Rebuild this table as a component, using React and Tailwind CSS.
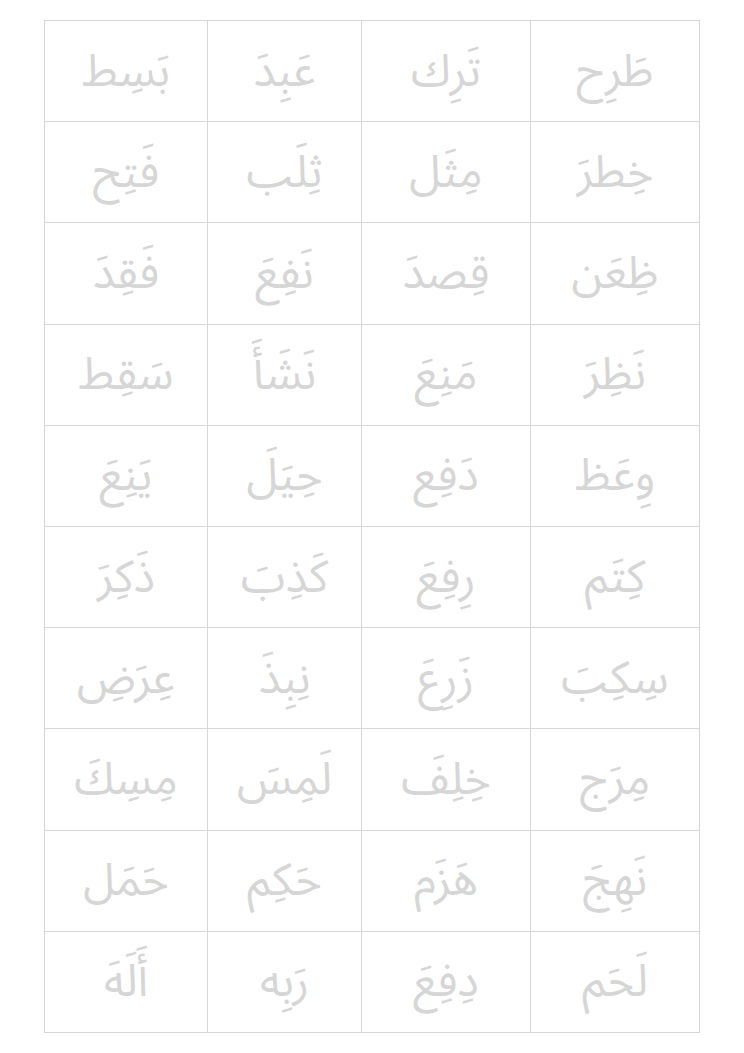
const rows = [
  ["طَرِح", "تَرِك", "عَبِدَ", "بَسِط"],
  ["خِطرَ", "مِثَل", "ثِلَب", "فَتِح"],
  ["ظِعَن", "قِصدَ", "نَفِعَ", "فَقِدَ"],
  ["نَظِرَ", "مَنِعَ", "نَشَأَ", "سَقِط"],
  ["وِعَظ", "دَفِع", "حِيَلَ", "يَنِعَ"],
  ["كِتَم", "رِفِعَ", "كَذِبَ", "ذَكِرَ"],
  ["سِكِبَ", "زَرِعَ", "نِبِذَ", "عِرَضِ"],
  ["مِرَج", "خِلِفَ", "لَمِسَ", "مِسِكَ"],
  ["نَهِجَ", "هَزَم", "حَكِم", "حَمَل"],
  ["لَحَم", "دِفِعَ", "رَبِه", "أَلَهَ"],
];

export default function App() {
  return (
    <div className="min-h-screen bg-white pt-[20px] pl-[44px]">
      <table
        dir="rtl"
        className="w-[655px] table-fixed border-collapse"
        style={{ fontFamily: '"Noto Sans Arabic", "DejaVu Sans", sans-serif' }}
      >
        <colgroup>
          <col className="w-[169px]" />
          <col className="w-[169px]" />
          <col className="w-[154px]" />
          <col className="w-[163px]" />
        </colgroup>
        <tbody>
          {rows.map((row, i) => (
            <tr key={i} className="h-[101.2px]">
              {row.map((word, j) => (
                <td
                  key={j}
                  className="border border-[#d6d6d6] p-0 text-center align-middle text-[45px] leading-none text-[#d6d6d6]"
                >
                  {word}
                </td>
              ))}
            </tr>
          ))}
        </tbody>
      </table>
    </div>
  );
}
